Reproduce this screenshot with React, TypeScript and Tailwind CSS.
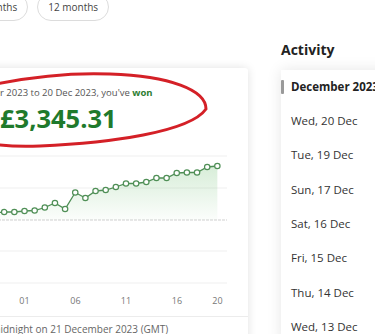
const ys = [
  214, 214, 213, 214, 213, 213, 213, 213, 212, 212,
  211, 210.5, 207.5, 203, 209, 192.5, 198, 191, 190, 187,
  183.5, 183.5, 182, 178, 178, 173, 172.5, 172.5, 167, 166,
];

// page x of each point; index 10 is 1 Dec
const pts = ys.map((y, i) => [24.5 + (i - 10) * 10.15, y] as const);
const line = pts.map(([x, y]) => `${x},${y}`).join(' ');
const area = `${pts[0][0]},220 ${line} ${pts[pts.length - 1][0]},220`;

const labels = [
  { x: 24.5, t: '01' },
  { x: 75.5, t: '06' },
  { x: 126, t: '11' },
  { x: 177, t: '16' },
  { x: 217.5, t: '20' },
];

const days = [
  'Wed, 20 Dec',
  'Tue, 19 Dec',
  'Sun, 17 Dec',
  'Sat, 16 Dec',
  'Fri, 15 Dec',
  'Thu, 14 Dec',
  'Wed, 13 Dec',
];

function Pill({ label }: { label: string }) {
  return (
    <div className="flex h-[28px] items-center rounded-full border border-[#dcdcdc] px-[10px] text-[10px] text-[#444]">
      {label}
    </div>
  );
}

function Chart() {
  return (
    <svg width="388" height="181" className="block">
      <defs>
        <linearGradient id="fill" x1="0" y1="0" x2="0" y2="1">
          <stop offset="0%" stopColor="#4caf50" stopOpacity="0.22" />
          <stop offset="100%" stopColor="#4caf50" stopOpacity="0.02" />
        </linearGradient>
      </defs>
      <g transform="translate(140,-135)">
        {[156, 188, 251, 283].map((y) => (
          <line key={y} x1={-130} x2={227} y1={y} y2={y} stroke="#efefef" strokeWidth="1" />
        ))}
        <line x1={-130} x2={227} y1={220} y2={220} stroke="#cfcfcf" strokeWidth="1" strokeDasharray="3 1" />
        <polygon points={area} fill="url(#fill)" />
        <polyline points={line} fill="none" stroke="#4f8f56" strokeWidth="1.3" />
        {pts.map(([x, y], i) => (
          <circle key={i} cx={x} cy={y} r="2.7" fill="#fff" stroke="#4f8f56" strokeWidth="1.2" />
        ))}
        {labels.map((l) => (
          <text key={l.t} x={l.x} y={303.5} fontSize="9" fill="#777" textAnchor="middle" fontFamily="Open Sans, sans-serif">
            {l.t}
          </text>
        ))}
      </g>
    </svg>
  );
}

export default function App() {
  return (
    <div className="relative h-[334px] w-[375px] overflow-hidden bg-white font-['Open_Sans',sans-serif]">
      <div className="ml-[-38px] mt-[-7px] flex gap-[9px]">
        <Pill label="6 months" />
        <Pill label="12 months" />
      </div>

      <div className="mt-[18.5px] flex items-start">
        <div className="ml-[-140px] mt-[28.5px] w-[388px] shrink-0 rounded-[3px] bg-white shadow-[0_0_10px_rgba(0,0,0,0.12)]">
          <div className="pt-[17px]">
            <div className="whitespace-nowrap pl-[58px] text-[9.5px] leading-[16px] text-[#555]">
              From 21 November 2023 to 20 Dec 2023, you've <span className="font-bold text-[#2e7d32]">won</span>
            </div>
            <div className="whitespace-nowrap pl-[140px] text-[25.5px] font-bold leading-[34px] text-[#1f7a2c]">
              £3,345.31
            </div>
          </div>
          <Chart />
          <div className="whitespace-nowrap border-t border-[#ececec] pb-[10px] pl-[68px] pt-[4px] text-[10px] leading-[16px] text-[#666]">
            Results up to midnight on 21 December 2023 (GMT)
          </div>
        </div>

        <div className="ml-[33px] shrink-0">
          <h2 className="h-[20px] text-[14px] font-bold leading-[20px] text-[#222]">Activity</h2>
          <div className="mt-[10px] w-[130px] bg-white shadow-[0_0_14px_rgba(0,0,0,0.1)]">
            <div className="flex h-[34px] items-center">
              <div className="h-[14px] w-[3px] rounded-[1px] bg-[#9a9a9a]" />
              <span className="ml-[7px] whitespace-nowrap text-[11.5px] font-bold text-[#222]">December 2023</span>
            </div>
            {days.map((d) => (
              <div key={d} className="flex h-[34.3px] items-center whitespace-nowrap pl-[10px] text-[11.5px] text-[#333]">
                {d}
              </div>
            ))}
          </div>
        </div>
      </div>

      <svg className="pointer-events-none absolute left-0 top-0" width="375" height="334">
        <path
          d="M 206 109 C 206 90, 170 76, 110 74 C 60 72, 10 80, -30 90 L -60 104 C -60 140, -10 148, 40 146 C 110 143, 190 132, 206 109 Z"
          fill="none"
          stroke="#d42027"
          strokeWidth="3"
          strokeLinecap="round"
        />
      </svg>
    </div>
  );
}
